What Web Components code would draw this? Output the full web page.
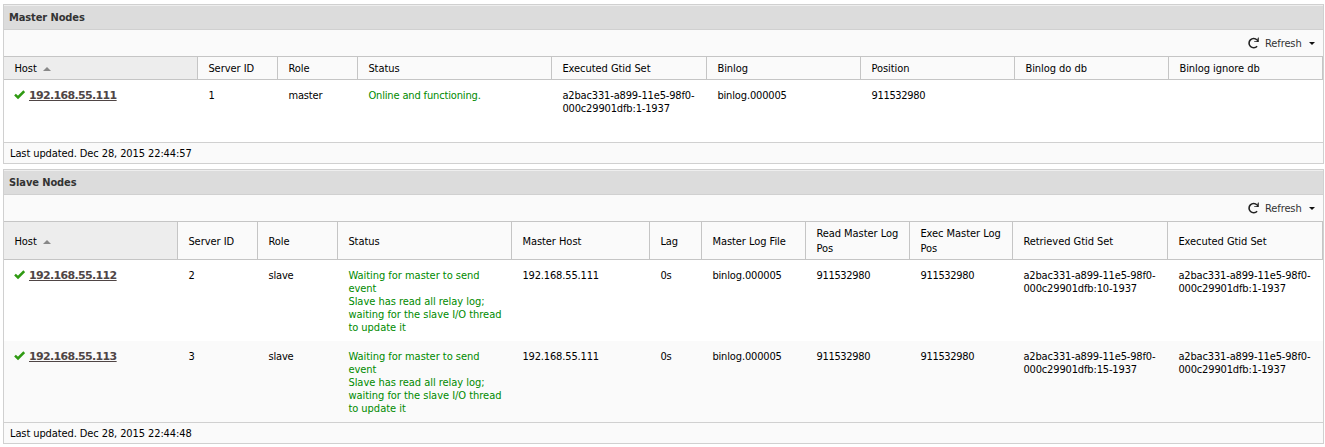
<!DOCTYPE html>
<html lang="en">
<head>
<meta charset="utf-8">
<title>Replication</title>
<style>
    body {
        margin: 0;
        padding: 4px 1px 0 3px;
        background: #fff;
        color: #000;
        font-family: "DejaVu Sans Condensed", "DejaVu Sans", sans-serif;
        font-stretch: condensed;
        font-size: 11px;
        line-height: 13px;
        letter-spacing: -0.1px;
    }
</style>
</head>
<body>
<node-panel id="master" heading="Master Nodes">
    <node-grid></node-grid>
    <span slot="footer">Last updated. Dec 28, 2015 22:44:57</span>
</node-panel>
<node-panel id="slave" heading="Slave Nodes">
    <node-grid></node-grid>
    <span slot="footer">Last updated. Dec 28, 2015 22:44:48</span>
</node-panel>

<script>
class RefreshButton extends HTMLElement {
    constructor() {
        super();
        this.attachShadow({ mode: 'open' });
    }

    connectedCallback() {
        this.shadowRoot.innerHTML = `
            <style>
                :host { display: flex; align-items: center; color: #333; }
                .label { width: 37px; margin-left: 5px; white-space: nowrap; }
                .arrow { margin-left: 7px; margin-top: 1px; }
                svg { display: block; }
            </style>
            <svg width="13" height="14" viewBox="0 0 13 14">
                <path d="M10 4A4.6 4.6 0 1 0 10.1 10.2" fill="none" stroke="#222" stroke-width="1.6"/>
                <path d="M11.8 1.6V6H7.2V5.2H9.6L11 1.6Z" fill="#222"/>
            </svg>
            <span class="label"><slot></slot></span>
            <svg class="arrow" width="6" height="3" viewBox="0 0 6 3"><path d="M0 0H6L3 3Z" fill="#111"/></svg>
        `;
    }
}

class HostLink extends HTMLElement {
    constructor() {
        super();
        this.attachShadow({ mode: 'open' });
    }

    connectedCallback() {
        this.shadowRoot.innerHTML = `
            <style>
                :host { display: flex; }
                svg { display: block; margin-top: 1px; }
                a {
                    margin-left: 4px;
                    color: #4f4545;
                    font-weight: bold;
                    font-family: "DejaVu Sans", sans-serif;
                    font-stretch: normal;
                    letter-spacing: -0.65px;
                    text-decoration: underline;
                }
            </style>
            <svg width="11" height="10" viewBox="0 0 11 10">
                <path d="M1 4.6L4 7.4L10.2 1.2" fill="none" stroke="#2f9a12" stroke-width="2.5"/>
            </svg>
            <a><slot></slot></a>
        `;
    }
}

class NodePanel extends HTMLElement {
    constructor() {
        super();
        this.attachShadow({ mode: 'open' });
    }

    connectedCallback() {
        this.shadowRoot.innerHTML = `
            <style>
                :host {
                    display: block;
                    box-sizing: border-box;
                    border: 1px solid #d0d0d0;
                    margin-bottom: 5px;
                }
                .title {
                    height: 23px;
                    border-top: 1px solid #eee;
                    border-bottom: 1px solid #d0d0d0;
                    background: #dcdcdc;
                    padding-left: 5px;
                    color: #333;
                    font-weight: bold;
                    line-height: 23px;
                }
                .toolbar {
                    display: flex;
                    justify-content: flex-end;
                    align-items: center;
                    height: 26px;
                    padding-right: 8px;
                    background: #fafafa;
                }
                .footer {
                    height: 20px;
                    border-top: 1px solid #d0d0d0;
                    background: #fafafa;
                    padding-left: 6px;
                    line-height: 22px;
                }
            </style>
            <div class="title">${this.getAttribute('heading')}</div>
            <div class="toolbar"><refresh-button>Refresh</refresh-button></div>
            <slot></slot>
            <div class="footer"><slot name="footer"></slot></div>
        `;
    }
}

class NodeGrid extends HTMLElement {
    constructor() {
        super();
        this.attachShadow({ mode: 'open' });
    }

    set data({ columns, rows, headerHeight, bodyHeight }) {
        const template = columns.map(c => c.width + 'px').join(' ');
        const sortIcon = '<svg width="8" height="4" viewBox="0 0 8 4"><path d="M4 0L8 4H0Z" fill="#888"/></svg>';

        const header = columns.map((c, i) => `
            <div class="head ${i === 0 ? 'sorted' : ''} ${headerHeight > 22 && !c.name.includes('<br>') ? 'single' : ''}">
                <span>${c.name}</span>${i === 0 ? sortIcon : ''}
            </div>
        `).join('');

        const body = rows.map(row => `
            <div class="row">${row.map((value, i) => {
                if (i === 0) return `<div class="cell"><host-link>${value}</host-link></div>`;
                const spacing = columns[i].spacing || -0.15;
                return `<div class="cell ${columns[i].name === 'Status' ? 'ok' : ''}" style="letter-spacing: ${spacing}px">${value}</div>`;
            }).join('')}</div>
        `).join('');

        this.shadowRoot.innerHTML = `
            <style>
                :host { display: block; }
                .header, .row { display: grid; grid-template-columns: ${template}; }
                .header {
                    height: ${headerHeight}px;
                    border-top: 1px solid #c5c5c5;
                    border-bottom: 1px solid #c5c5c5;
                    background: #fafafa;
                    line-height: 15px;
                    letter-spacing: -0.05px;
                }
                .head {
                    display: flex;
                    align-items: center;
                    box-sizing: border-box;
                    border-right: 1px solid #c5c5c5;
                    padding-left: 10.4px;
                    white-space: nowrap;
                }
                .single { padding-top: 2px; }
                .head svg { margin: 1px 0 0 6px; }
                .sorted { background: #ededed; }
                .body { height: ${bodyHeight}px; }
                .row { height: 81px; }
                .row:nth-child(even) { background: #fafafa; }
                .cell { padding: 9px 0 0 10.4px; white-space: nowrap; }
                .cell:first-child { padding-left: 10px; }
                .ok { color: #008a00; }
            </style>
            <div class="header">${header}</div>
            <div class="body">${body}</div>
        `;
    }
}

customElements.define('refresh-button', RefreshButton);
customElements.define('host-link', HostLink);
customElements.define('node-panel', NodePanel);
customElements.define('node-grid', NodeGrid);

const slaveStatus = 'Waiting for master to send<br>event<br>Slave has read all relay log;<br>waiting for the slave I/O thread<br>to update it';

document.querySelector('#master node-grid').data = {
    headerHeight: 22,
    bodyHeight: 62,
    columns: [
        { name: 'Host', width: 194 },
        { name: 'Server ID', width: 80 },
        { name: 'Role', width: 80 },
        { name: 'Status', width: 194 },
        { name: 'Executed Gtid Set', width: 155 },
        { name: 'Binlog', width: 154 },
        { name: 'Position', width: 154, spacing: -0.3 },
        { name: 'Binlog do db', width: 154 },
        { name: 'Binlog ignore db', width: 154 }
    ],
    rows: [
        ['192.168.55.111', '1', 'master', 'Online and functioning.', 'a2bac331-a899-11e5-98f0-<br>000c29901dfb:1-1937', 'binlog.000005', '911532980', '', '']
    ]
};

document.querySelector('#slave node-grid').data = {
    headerHeight: 37,
    bodyHeight: 162,
    columns: [
        { name: 'Host', width: 174 },
        { name: 'Server ID', width: 80 },
        { name: 'Role', width: 80 },
        { name: 'Status', width: 174, spacing: -0.03 },
        { name: 'Master Host', width: 138 },
        { name: 'Lag', width: 52 },
        { name: 'Master Log File', width: 104 },
        { name: 'Read Master Log<br>Pos', width: 104, spacing: -0.3 },
        { name: 'Exec Master Log<br>Pos', width: 103, spacing: -0.3 },
        { name: 'Retrieved Gtid Set', width: 155 },
        { name: 'Executed Gtid Set', width: 155 }
    ],
    rows: [
        ['192.168.55.112', '2', 'slave', slaveStatus, '192.168.55.111', '0s', 'binlog.000005', '911532980', '911532980', 'a2bac331-a899-11e5-98f0-<br>000c29901dfb:10-1937', 'a2bac331-a899-11e5-98f0-<br>000c29901dfb:1-1937'],
        ['192.168.55.113', '3', 'slave', slaveStatus, '192.168.55.111', '0s', 'binlog.000005', '911532980', '911532980', 'a2bac331-a899-11e5-98f0-<br>000c29901dfb:15-1937', 'a2bac331-a899-11e5-98f0-<br>000c29901dfb:1-1937']
    ]
};
</script>
</body>
</html>
